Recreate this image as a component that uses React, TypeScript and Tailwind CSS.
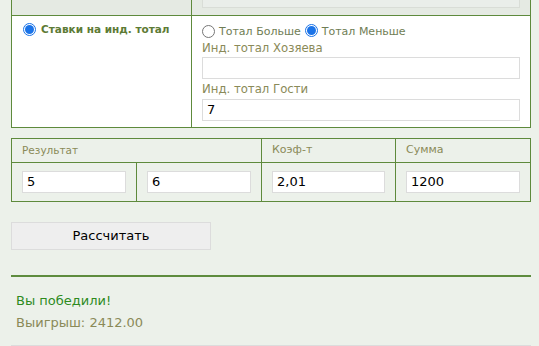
import React from "react";

const F = { fontFamily: '"DejaVu Sans", Verdana, sans-serif' };

function Radio({ checked }: { checked?: boolean }) {
  return (
    <span
      className={
        "inline-flex h-[13px] w-[13px] shrink-0 items-center justify-center rounded-full border " +
        (checked ? "border-[#1a73e8] bg-white" : "border-[#767676] bg-white")
      }
    >
      {checked && <span className="h-[9px] w-[9px] rounded-full bg-[#1a73e8]" />}
    </span>
  );
}

function Field({ value, w }: { value?: string; w: string }) {
  return (
    <div
      className={
        "flex h-[22px] items-center border border-[#dcdcdc] bg-white pl-[4px] text-[13px] text-black " + w
      }
    >
      {value}
    </div>
  );
}

export default function App() {
  return (
    <div className="min-h-[346px] w-[539px] overflow-hidden bg-[#ecf1ea]" style={F}>
      <div className="ml-[11px] w-[520px]">
        {/* Table 1 */}
        <div className="border-x border-b border-[#5e8a3c]">
          <div className="flex h-[16px] border-b border-[#5e8a3c] bg-[#e5eae3]">
            <div className="w-[180px] border-r border-[#5e8a3c]" />
            <div className="flex-1 pl-[10px] pr-[10px]">
              <div className="h-[8px] w-[318px] border-x border-b border-[#d9ddd7] bg-[#eaeeea]" />
            </div>
          </div>
          <div className="flex h-[111px] bg-white">
            <div className="flex w-[180px] gap-[5px] border-r border-[#5e8a3c] pl-[11px] pt-[7px]">
              <Radio checked />
              <span className="text-[10.5px] font-bold leading-[13px] text-[#5d7b35]">
                Ставки на инд. тотал
              </span>
            </div>
            <div className="flex-1 pl-[10px] pt-[8px]">
              <div className="flex items-center text-[11px] leading-[15px] text-[#6f7d55]">
                <Radio />
                <span className="ml-[4px]">Тотал Больше</span>
                <span className="ml-[4px]">
                  <Radio checked />
                </span>
                <span className="ml-[4px]">Тотал Меньше</span>
              </div>
              <div className="mt-[2px] text-[11.7px] leading-[14px] text-[#8a8a58]">Инд. тотал Хозяева</div>
              <div className="mt-[2px]">
                <Field w="w-[318px]" />
              </div>
              <div className="mt-[3px] text-[11.7px] leading-[14px] text-[#8a8a58]">Инд. тотал Гости</div>
              <div className="mt-[3px]">
                <Field w="w-[318px]" value="7" />
              </div>
            </div>
          </div>
        </div>

        {/* Table 2 */}
        <div className="mt-[10px] border-l border-t border-[#5e8a3c]">
          <div className="grid h-[24px] grid-cols-[250px_134px_135px] text-[11px] text-[#8a8a58]">
            <div className="flex items-center border-b border-r border-[#5e8a3c] pl-[10px] text-[10.5px]">Результат</div>
            <div className="flex items-center border-b border-r border-[#5e8a3c] pl-[10px]">Коэф-т</div>
            <div className="flex items-center border-b border-r border-[#5e8a3c] pl-[10px]">Сумма</div>
          </div>
          <div className="grid h-[39px] grid-cols-[125px_125px_134px_135px]">
            <div className="flex items-center border-b border-r border-[#5e8a3c] pl-[10px]">
              <Field w="w-[104px]" value="5" />
            </div>
            <div className="flex items-center border-b border-r border-[#5e8a3c] pl-[10px]">
              <Field w="w-[104px]" value="6" />
            </div>
            <div className="flex items-center border-b border-r border-[#5e8a3c] pl-[10px]">
              <Field w="w-[113px]" value="2,01" />
            </div>
            <div className="flex items-center border-b border-r border-[#5e8a3c] pl-[10px]">
              <Field w="w-[114px]" value="1200" />
            </div>
          </div>
        </div>

        {/* Button */}
        <div className="mt-[20px] flex h-[28px] w-[200px] items-center justify-center border border-[#dcdcdc] bg-[#eeeeee] text-[13px] text-black">
          Рассчитать
        </div>

        <div className="mt-[25px] h-[2px] w-[520px] bg-[#5e8c3e]" />

        <div className="mt-[13px] pl-[5px] text-[13px] leading-[22px]">
          <div className="text-[#2e8b1e]">Вы победили!</div>
          <div className="text-[#8a8a58]">Выигрыш: 2412.00</div>
        </div>

        <div className="mt-[11px] h-[2px] w-[520px] bg-[#dcdcdc]" />
      </div>
    </div>
  );
}
